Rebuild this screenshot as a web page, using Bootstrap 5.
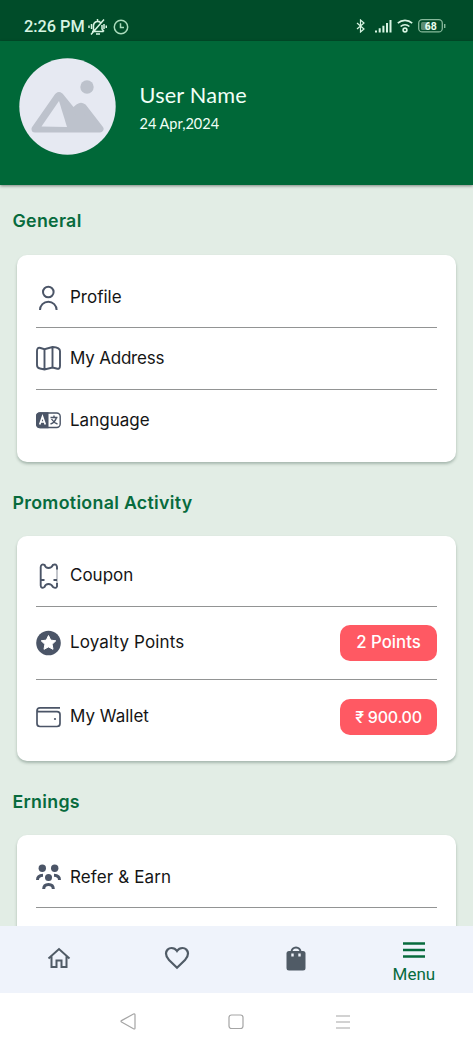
<!DOCTYPE html>
<html lang="en">
<head>
<meta charset="utf-8">
<meta name="viewport" content="width=device-width, initial-scale=1">
<title>Menu</title>
<link href="https://cdn.jsdelivr.net/npm/bootstrap@5.3.0/dist/css/bootstrap.min.css" rel="stylesheet">
<style>
:root{--brand:#006838;--slate:#4b5567}
body{background:#e2ede5;color:#151515;font-family:Inter,"Noto Sans",sans-serif;overflow:hidden}
svg{display:block;flex:none}
.screen{height:1050px}
.status{height:41px;background:#004c29;color:#d8f5e3;padding:12px 26px 0 24px;font:500 16.3px/29px Roboto,sans-serif}
.profile{height:144px;background:var(--brand);padding:17px 19px;color:#f0fff6;box-shadow:0 1px 3px rgba(0,0,0,.45);font-family:Lato,sans-serif;position:relative}
.user-name{font-size:21.7px;line-height:28px;letter-spacing:.2px}
.user-date{font-size:14.5px;line-height:20px;margin-top:5px}
.content-area{flex:1 1 0;min-height:0;overflow:hidden}
.section-title{height:70px;padding:0 12.5px;color:#076b3d;font-size:17.8px;font-weight:600;line-height:72px;letter-spacing:.3px;margin:0}
.section-title.lower{height:74.5px;line-height:82px}
.panel{margin:0 17px;padding:11.5px 19px 10.5px;background:#fff;border-radius:10px;box-shadow:0 2px 3px rgba(30,60,45,.3)}
.panel-b{padding-top:9px;padding-bottom:7.5px}
.entry{height:61.5px;font-size:17px;border-bottom:1px solid #929494;gap:9px}
.panel:not(.panel-b) .entry:first-child{padding-top:2px}
.panel-b .entry:first-child{padding-top:1px}
.entry:last-child{border:0}
.entry.tall{height:73.5px}
.entry.tall:last-child{height:73px}
.wide{letter-spacing:.12px}
.tight{letter-spacing:-.2px}
.pill{width:97px;height:36px;border-radius:10px;background:#ff5963;color:#fff;font-size:16.8px;font-weight:500}
.pill .amount{font-size:16px;letter-spacing:-.25px}
.ico{width:25px;height:26px;color:var(--slate)}
.tabs{height:67px;background:#eff3fb;color:#505b66;position:relative}
.tabs .col{height:64px}
.tabs .on{color:#076b3d;font:400 17px/20px Roboto,sans-serif}
.sysbar{height:57px;background:#fff;padding:0 120px}
</style>
</head>
<body>
<div class="screen d-flex flex-column">
  <div class="status flex-shrink-0 d-flex justify-content-between">
    <div class="d-flex align-items-center">
      <span>2:26 PM</span>
      <svg style="margin-left:3px" width="19" height="18" viewBox="0 0 19 18" fill="none" stroke="currentColor" stroke-width="1.5"><path d="M4 13.500h11.500M5.500 13V7.500a4.200 4.200 0 0 1 7-3M14 7v4l2 2.500M3 16.500 16 1.500M8 16h4M3.500 6v5M1 7.500v2.500M16 6v5M18.300 7.500v2.500M9.500 1v2"/></svg>
      <svg style="margin-left:6px" width="16" height="16" viewBox="0 0 16 16" fill="none" stroke="#a9dcbc" stroke-width="1.500"><circle cx="8" cy="8" r="6.700"/><path d="M7.500 4.200V8.500H11"/></svg>
    </div>
    <div class="d-flex align-items-center" style="margin-top:-2px">
      <svg width="10" height="14" viewBox="0 0 10 14" fill="none" stroke="currentColor" stroke-width="1.200"><path d="M1 4l7 6-3.500 3V1L8 4 1 10"/></svg>
      <svg style="margin-left:8px" width="18" height="14" viewBox="0 0 18 14" fill="none" stroke="currentColor" stroke-width="2"><path d="M2 13.500v-2M5.700 13.500V9.300M9.400 13.500V6.700M13 13.500V4M16.500 13.500V1"/></svg>
      <svg style="margin-left:5px" width="16" height="14" viewBox="0 0 16 14" fill="none" stroke="currentColor" stroke-width="1.600"><path d="M.8 4.200a10.500 10.500 0 0 1 14.400 0M3.600 7.500a6.500 6.500 0 0 1 8.800 0"/><circle cx="8" cy="11" r="1.900"/></svg>
      <svg style="margin-left:5px" width="29" height="14" viewBox="0 0 29 14"><rect x=".7" y=".7" width="23.600" height="12.200" rx="3.500" fill="none" stroke="#86b99b" stroke-width="1.300"/><rect x="3" y="3" width="9" height="8" rx="1.500" fill="#5d8d72"/><path d="M26.700 5v4" stroke="#86b99b" stroke-width="1.400"/><text x="12.700" y="10.800" text-anchor="middle" font-family="Roboto" font-weight="700" font-size="10.500" fill="#e8fff0">68</text></svg>
    </div>
  </div>
  <header class="profile flex-shrink-0 d-flex">
    <svg width="97" height="97" viewBox="0 0 97 97"><circle cx="48.500" cy="48.500" r="48.200" fill="#e6e9f2"/><circle cx="68" cy="29" r="6.700" fill="#bdc2cc"/><path d="M16 71 39 38q1-.7 2 0L54 54l6-5q2-1.500 4 0L81 71Z" fill="#bdc2cc" stroke="#bdc2cc" stroke-width="7" stroke-linejoin="round"/><path d="M22.500 68.500 40 43 48 69Z" fill="#e6e9f2"/></svg>
    <div style="margin-left:23.500px;padding-top:23px">
      <div class="user-name">User Name</div>
      <div class="user-date">24 Apr,2024</div>
    </div>
  </header>
  <main class="content-area">
    <h2 class="section-title">General</h2>
    <section class="panel">
      <div class="entry d-flex align-items-center"><svg class="ico" viewBox="0 0 25 26" fill="none" stroke="currentColor" stroke-width="2"><circle cx="12.300" cy="7" r="5.300"/><path d="M4 25a8.300 8.300 0 0 1 16.600 0"/></svg><span>Profile</span></div>
      <div class="entry d-flex align-items-center"><svg class="ico" viewBox="0 0 25 26" fill="none" stroke="currentColor" stroke-width="1.900"><path d="M1 6Q1 2 4.500 3L8.500 4.200 16.500 2Q24 2.500 24 6V21Q24 24.500 20.500 23.500L16.500 22.500 8.500 24.500 4 23.500Q1 23 1 20ZM8.500 4.200v20M16.500 2v20.500"/></svg><span class="tight">My Address</span></div>
      <div class="entry d-flex align-items-center"><svg class="ico" viewBox="0 0 25 26" fill="none" stroke="currentColor" stroke-width="1.400"><rect x=".8" y="6" width="23.400" height="14.500" rx="3.500"/><path d="M12.500 5.300H4Q0 5.300 0 9V17.500Q0 21.200 4 21.200H12.500Z" fill="currentColor" stroke="none"/><path d="M3.700 17.500 6.500 9.500 9.300 17.500M4.700 15h3.600" stroke="#fff" stroke-width="1.700"/><path d="M14.500 10.500h7M18 8.500v2M20.500 10.500Q19 15.500 14.500 17M15.500 12Q18 16 21.500 17"/></svg><span>Language</span></div>
    </section>
    <h2 class="section-title lower">Promotional Activity</h2>
    <section class="panel panel-b">
      <div class="entry d-flex align-items-center"><svg class="ico" viewBox="0 0 25 26" fill="none" stroke="currentColor" stroke-width="1.900"><path d="M21 20V23.500Q20 26 17 24Q15.500 21 12.500 21Q9.500 21 8.500 24Q5 26 4.700 22.500V4Q5 .5 8.500 1.800Q9.500 5 12.500 5Q15.500 5 17 1.800Q20.500 .5 21 4V6.500"/><path d="M21 5V21" stroke-width="1" opacity=".65"/><path d="M4.700 17H8.500M17.500 17H21"/></svg><span>Coupon</span></div>
      <div class="entry tall d-flex align-items-center"><svg class="ico" viewBox="0 0 25 26"><circle cx="12.500" cy="13" r="12.300" fill="currentColor"/><path d="m12.500 5.500 2.200 4.600 5.100.7-3.700 3.500.9 5-4.500-2.400L8 19.300l.9-5-3.700-3.500 5.100-.7Z" fill="#fff" stroke="#fff" stroke-linejoin="round"/></svg><span class="wide">Loyalty Points</span><span class="pill ms-auto d-flex align-items-center justify-content-center"><span>2 Points</span></span></div>
      <div class="entry tall d-flex align-items-center"><svg class="ico" viewBox="0 0 25 26" fill="none" stroke="currentColor" stroke-width="1.700"><path d="M24 3.800H4Q1 3.800 1 7V19.500Q1 22.500 4 22.500H21Q24 22.500 24 19.500V10.500Q24 7.600 21 7.600H3Q1 7.600 1 6"/><circle cx="19" cy="15" r="1.100" fill="currentColor" stroke="none"/></svg><span>My Wallet</span><span class="pill ms-auto d-flex align-items-center justify-content-center"><span class="amount">₹ 900.00</span></span></div>
    </section>
    <h2 class="section-title lower">Ernings</h2>
    <section class="panel panel-b" style="padding-top:11.500px">
      <div class="entry d-flex align-items-center"><svg class="ico" viewBox="0 0 25 26" fill="none" stroke="currentColor" stroke-width="3"><g fill="currentColor" stroke="none"><circle cx="6.300" cy="4.300" r="3.700"/><circle cx="18.700" cy="4.300" r="3.700"/><circle cx="12.500" cy="13.500" r="3.500"/></g><path d="M1.500 16Q1.500 11.500 7 11.300M23.500 16Q23.500 11.500 18 11.300M7.700 25Q7.700 20.500 12.500 20.500T17.300 25"/></svg><span class="wide">Refer &amp; Earn</span></div>
      <div class="entry"></div>
    </section>
  </main>
  <nav class="tabs flex-shrink-0 row row-cols-4 g-0">
    <div class="col d-flex align-items-center justify-content-center"><svg width="24" height="24" viewBox="0 0 24 24" fill="none" stroke="currentColor" stroke-width="2"><path d="M1.500 12.500 12 3 22.500 12.500M4.500 10.500V21H9.500V14.500H14.500V21H19.500V10.500"/></svg></div>
    <div class="col d-flex align-items-center justify-content-center"><svg width="26" height="24" viewBox="0 0 26 24" fill="none" stroke="currentColor" stroke-width="2.200"><path d="M13 21.800 5 14Q2 11 2 7.500A5.500 5.500 0 0 1 7.500 2Q11 2 13 5Q15 2 18.500 2A5.500 5.500 0 0 1 24 7.500Q24 11 21 14Z"/></svg></div>
    <div class="col d-flex align-items-center justify-content-center"><svg width="20" height="25" viewBox="0 0 20 25"><path d="M5.500 6a4.500 4.500 0 0 1 9 0" fill="none" stroke="currentColor" stroke-width="2"/><rect x=".5" y="5" width="19" height="19.500" rx="2.500" fill="currentColor"/><path d="M6.500 7.500v3M13.500 7.500v3" stroke="#eff3fb" stroke-width="2.400"/></svg></div>
    <div class="col on d-flex flex-column align-items-center" style="padding-top:16px"><svg width="22" height="16" viewBox="0 0 22 16" stroke="currentColor" stroke-width="2.300"><path d="M0 1.500H22M0 8H22M0 14.500H22"/></svg><span style="margin-top:6px">Menu</span></div>
  </nav>
  <div class="sysbar flex-shrink-0 d-flex align-items-center justify-content-between" style="color:#a5a5a5">
    <svg width="16" height="17" viewBox="0 0 16 17" fill="none" stroke="currentColor" stroke-width="1.200" stroke-linejoin="round"><path d="M1.500 7.600 13.500 1Q15 .5 15 2V15Q15 16.500 13.500 15.800L1.500 9Q.5 8.300 1.500 7.600Z"/></svg>
    <svg width="16" height="16" viewBox="0 0 16 16" fill="none" stroke="currentColor" stroke-width="1.200"><rect x="1" y="1" width="14" height="13.500" rx="2.500"/></svg>
    <svg style="margin-right:2px" width="16" height="16" viewBox="0 0 16 16" stroke="currentColor" stroke-width="1.200"><path d="M1 2H15M1 8H15M1 14H15"/></svg>
  </div>
</div>
<script src="https://cdn.jsdelivr.net/npm/bootstrap@5.3.0/dist/js/bootstrap.bundle.min.js"></script>
</body>
</html>
